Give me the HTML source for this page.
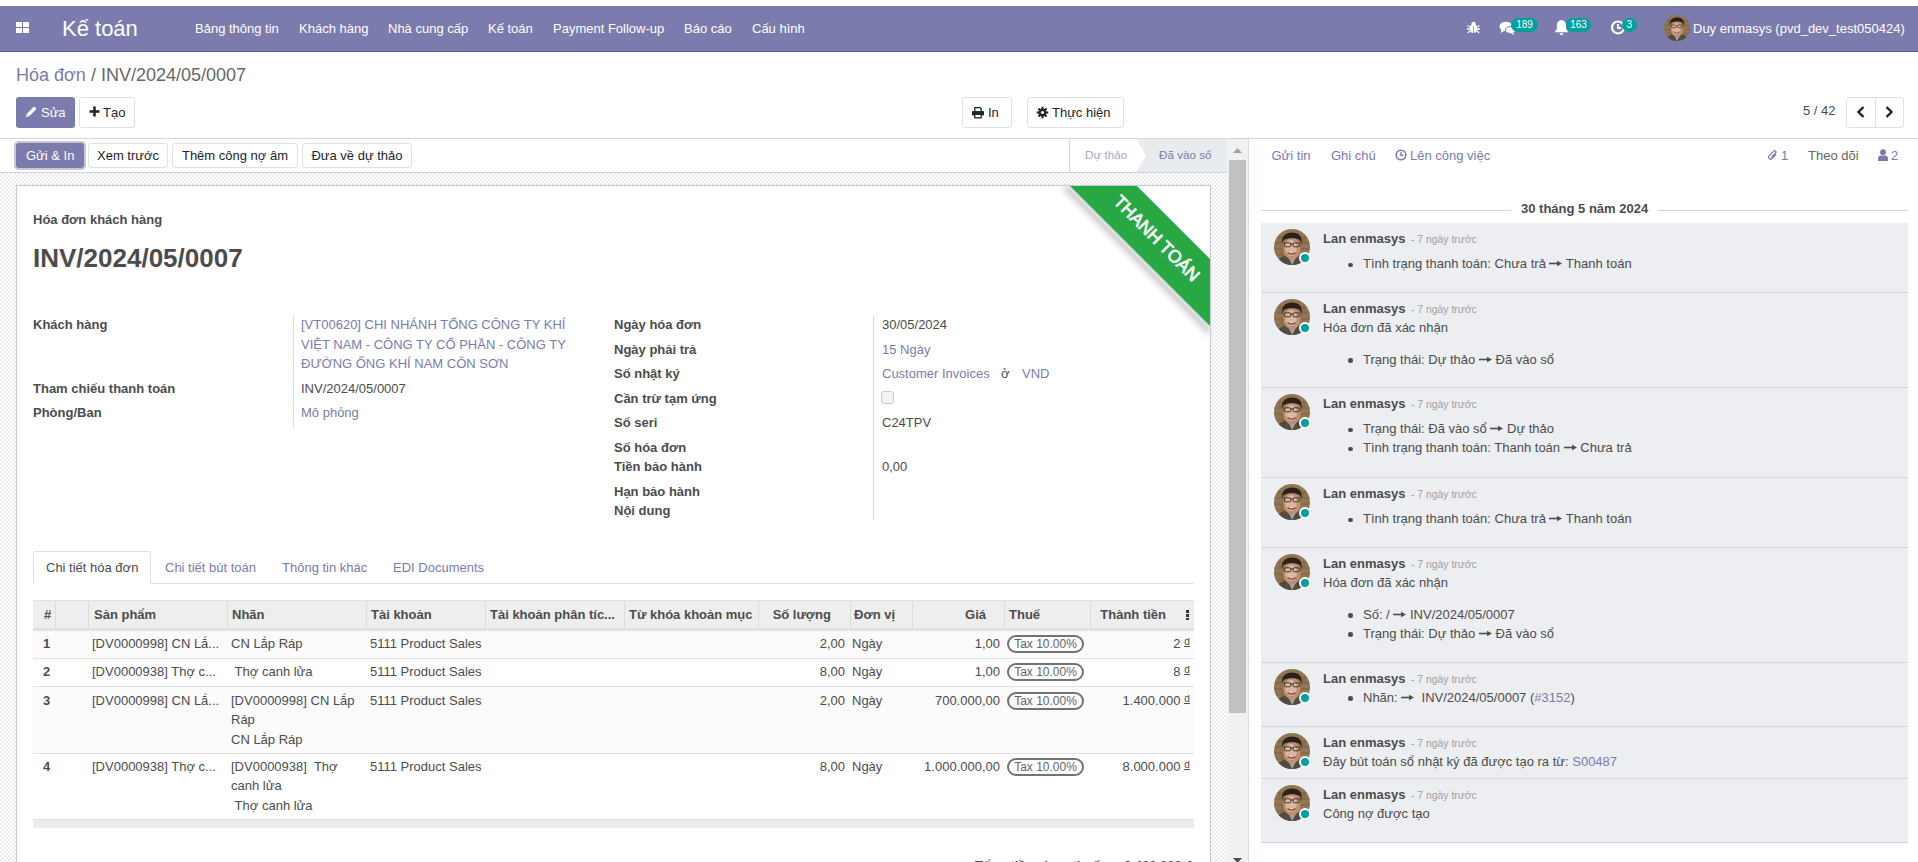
<!DOCTYPE html><html><head><meta charset="utf-8"><style>
*{box-sizing:border-box;margin:0;padding:0}
html,body{width:1918px;height:862px;overflow:hidden;background:#fff;font-family:"Liberation Sans",sans-serif;font-size:13px;color:#4c4c4c}
.a{position:absolute;white-space:nowrap}
.r{position:absolute}
.badge{position:absolute;background:#00a09d;color:#fff;border-radius:7px;font-size:10px;line-height:14px;height:14px;text-align:center}
.btn{position:absolute;border:1px solid #dee2e6;border-radius:3px;background:#fff}
.chk{background-image:conic-gradient(#ebebeb 25%,#fff 0 50%,#ebebeb 0 75%,#fff 0);background-size:4px 4px}
.tax{position:absolute;border:2px solid #737373;border-radius:9px;height:18px;width:77px;font-size:12px;line-height:15px;color:#666;text-align:center}
.av{position:absolute;width:36px;height:36px;border-radius:50%;overflow:hidden;background:#8b6a48}
.dot{position:absolute;width:12px;height:12px;border-radius:50%;background:#00a09d;border:2px solid #fff}
svg{position:absolute;overflow:visible}
</style></head><body>
<svg width="0" height="0" style="position:absolute"><defs><symbol id="face" viewBox="0 0 36 36"><clipPath id="cc"><circle cx="18" cy="18" r="18"/></clipPath><g clip-path="url(#cc)"><rect width="36" height="36" fill="#927653"/><path d="M0 8h36M0 14h36M0 20h36M0 26h36M6 8v6M26 14v6M8 20v6M30 8v6" stroke="#6a5538" stroke-width="1.1" opacity=".55"/><path d="M2 36C3 30 7 27.5 12 26.5L18 29L24 26.5C29 27.5 33 30 34 36z" fill="#544b40"/><path d="M14 27L18 36L23 27z" fill="#9fa39e"/><ellipse cx="18" cy="19.5" rx="8.6" ry="11" fill="#c08f73"/><ellipse cx="17" cy="19" rx="5.8" ry="8" fill="#dcb69f"/><path d="M8 15C7 7 12 3.5 18 3.5C24.5 3.5 29 7 27.5 15L26 11C22 8.5 14 8.5 9.5 11z" fill="#2b201a"/><rect x="10.5" y="13.8" width="6.2" height="4" rx="1.2" fill="none" stroke="#33261f" stroke-width="0.9"/><rect x="19" y="13.8" width="6.2" height="4" rx="1.2" fill="none" stroke="#33261f" stroke-width="0.9"/><path d="M16.7 15h2.3" stroke="#33261f" stroke-width="0.9"/><path d="M13.5 23.5Q17.5 26.8 21.5 23.5" stroke="#6e4034" stroke-width="1.3" fill="#efe2d8"/></g></symbol></defs></svg>
<div class="r" style="left:0px;top:6px;width:1918px;height:46px;background:#7c7bad;border-bottom:1px solid #5f5e97"></div>
<div class="r" style="left:16px;top:22px;width:6px;height:5px;background:#fff"></div>
<div class="r" style="left:23px;top:22px;width:6px;height:5px;background:#fff"></div>
<div class="r" style="left:16px;top:28px;width:6px;height:5px;background:#fff"></div>
<div class="r" style="left:23px;top:28px;width:6px;height:5px;background:#fff"></div>
<div class="a" style="left:62px;top:11.88px;font-size:22px;line-height:33px;color:#fff;">Kế toán</div>
<div class="a" style="left:195px;top:18.50px;font-size:13px;line-height:20px;color:#fff;">Bảng thông tin</div>
<div class="a" style="left:299px;top:18.50px;font-size:13px;line-height:20px;color:#fff;">Khách hàng</div>
<div class="a" style="left:388px;top:18.50px;font-size:13px;line-height:20px;color:#fff;">Nhà cung cấp</div>
<div class="a" style="left:488px;top:18.50px;font-size:13px;line-height:20px;color:#fff;">Kế toán</div>
<div class="a" style="left:553px;top:18.50px;font-size:13px;line-height:20px;color:#fff;">Payment Follow-up</div>
<div class="a" style="left:684px;top:18.50px;font-size:13px;line-height:20px;color:#fff;">Báo cáo</div>
<div class="a" style="left:752px;top:18.50px;font-size:13px;line-height:20px;color:#fff;">Cấu hình</div>
<svg style="left:1467px;top:21px" width="13" height="13" viewBox="0 0 13 13"><ellipse cx="6.5" cy="7.5" rx="3.6" ry="4.5" fill="#fff"/><circle cx="6.5" cy="3" r="2.2" fill="#fff"/><path d="M0.5 4.5L3 6M12.5 4.5L10 6M0 8h3M13 8h-3M0.8 12L3 10M12.2 12L10 10" stroke="#fff" stroke-width="1.3"/><path d="M6.5 5.5v6.5" stroke="#7c7bad" stroke-width="0.8"/></svg>
<svg style="left:1499px;top:21px" width="17" height="14" viewBox="0 0 17 14"><ellipse cx="7" cy="5.5" rx="6.5" ry="4.8" fill="#fff"/><path d="M2.5 8.5L1.5 12L6 9.5z" fill="#fff"/><ellipse cx="11.5" cy="9" rx="5" ry="3.6" fill="#fff" stroke="#7c7bad" stroke-width="1"/><path d="M14 11.5L15.5 14L11.5 12z" fill="#fff"/></svg>
<div class="badge" style="left:1511px;top:18px;width:27px">189</div>
<svg style="left:1552.5px;top:19px" width="17" height="17" viewBox="0 0 16 16"><path d="M8 1.2C5 1.2 3.6 3.6 3.6 6.5v3.2L1.5 12.5h13L12.4 9.7V6.5C12.4 3.6 11 1.2 8 1.2z" fill="#fff"/><path d="M6.2 13.5a1.8 1.8 0 0 0 3.6 0z" fill="#fff"/></svg>
<div class="badge" style="left:1566px;top:18px;width:25px">163</div>
<svg style="left:1609.5px;top:19px" width="16" height="16" viewBox="0 0 16 16"><circle cx="8" cy="8.5" r="6" fill="none" stroke="#fff" stroke-width="2.2"/><path d="M8 5v4h3" stroke="#fff" stroke-width="1.8" fill="none"/></svg>
<div class="badge" style="left:1621.5px;top:18px;width:15.5px">3</div>
<svg style="left:1664px;top:15px" width="26" height="26" viewBox="0 0 36 36"><use href="#face"/></svg>
<div class="a" style="left:1693px;top:18.50px;font-size:13px;line-height:20px;color:#fff;">Duy enmasys (pvd_dev_test050424)</div>
<div class="a" style="left:16px;top:62.26px;font-size:18px;line-height:27px;"><span style="color:#7c7bad">Hóa đơn</span> <span style="color:#666">/ INV/2024/05/0007</span></div>
<div class="r" style="left:16px;top:97px;width:59px;height:31px;background:#7c7bad;border-radius:3px"></div>
<svg style="left:25px;top:106px" width="12" height="12" viewBox="0 0 12 12"><path d="M1 11l0.6-3L8.5 1.1a1 1 0 0 1 1.4 0l1 1a1 1 0 0 1 0 1.4L4 10.4z" fill="#fff"/><path d="M1.8 8.2l2 2" stroke="#7c7bad" stroke-width="0.8"/></svg>
<div class="a" style="left:41px;top:102.50px;font-size:13px;line-height:20px;color:#fff;">Sửa</div>
<div class="btn" style="left:79px;top:97px;width:56px;height:31px"></div>
<svg style="left:89px;top:106px" width="11" height="11" viewBox="0 0 11 11"><path d="M5.5 0.5v10M0.5 5.5h10" stroke="#212529" stroke-width="2.6"/></svg>
<div class="a" style="left:103px;top:102.50px;font-size:13px;line-height:20px;color:#212529;">Tạo</div>
<div class="btn" style="left:962px;top:97px;width:50px;height:31px"></div>
<svg style="left:972px;top:107px" width="12" height="12" viewBox="0 0 12 12"><path d="M2.8 4.2V0.7H8.2L9.2 1.7V4.2" fill="none" stroke="#212529" stroke-width="1.3"/><rect x="0" y="4" width="12" height="4.6" rx="0.8" fill="#212529"/><rect x="2.8" y="7.3" width="6.4" height="3.5" fill="#fff" stroke="#212529" stroke-width="1.3"/></svg>
<div class="a" style="left:988px;top:102.50px;font-size:13px;line-height:20px;color:#212529;">In</div>
<div class="btn" style="left:1027px;top:97px;width:97px;height:31px"></div>
<svg style="left:1037px;top:107px" width="11" height="11" viewBox="0 0 12 12"><g fill="#212529"><rect x="4.9" y="-0.3" width="2.2" height="3" transform="rotate(0 6 6)"/><rect x="4.9" y="-0.3" width="2.2" height="3" transform="rotate(45 6 6)"/><rect x="4.9" y="-0.3" width="2.2" height="3" transform="rotate(90 6 6)"/><rect x="4.9" y="-0.3" width="2.2" height="3" transform="rotate(135 6 6)"/><rect x="4.9" y="-0.3" width="2.2" height="3" transform="rotate(180 6 6)"/><rect x="4.9" y="-0.3" width="2.2" height="3" transform="rotate(225 6 6)"/><rect x="4.9" y="-0.3" width="2.2" height="3" transform="rotate(270 6 6)"/><rect x="4.9" y="-0.3" width="2.2" height="3" transform="rotate(315 6 6)"/><circle cx="6" cy="6" r="4.3"/></g><circle cx="6" cy="6" r="1.7" fill="#fff"/></svg>
<div class="a" style="left:1052px;top:102.50px;font-size:13px;line-height:20px;color:#212529;">Thực hiện</div>
<div class="a" style="left:1803px;top:101.00px;font-size:13px;line-height:20px;color:#4c4c4c;">5 / 42</div>
<div class="btn" style="left:1846px;top:97px;width:58px;height:31px"></div>
<div class="r" style="left:1875px;top:98px;width:1px;height:29px;background:#dee2e6"></div>
<svg style="left:1856px;top:106px" width="10" height="12" viewBox="0 0 10 12"><path d="M7.5 1L2.5 6l5 5" stroke="#212529" stroke-width="2.4" fill="none"/></svg>
<svg style="left:1884px;top:106px" width="10" height="12" viewBox="0 0 10 12"><path d="M2.5 1l5 5-5 5" stroke="#212529" stroke-width="2.4" fill="none"/></svg>
<div class="r" style="left:0px;top:138px;width:1918px;height:1px;background:#d5d5d5"></div>
<div class="r" style="left:0px;top:139px;width:1227px;height:33px;background:#fff"></div>
<div class="r" style="left:0px;top:172px;width:1227px;height:1px;background:#cfd3dc"></div>
<div class="r" style="left:0px;top:173px;width:1227px;height:700px;"></div>
<div class="r chk" style="left:0;top:173px;width:1227px;height:700px"></div>
<div class="r" style="left:14px;top:141px;width:72px;height:29px;border-radius:4.5px;background:rgba(124,123,173,.42)"></div>
<div class="r" style="left:16px;top:143px;width:68px;height:25px;background:#7c7bad;border-radius:3px"></div>
<div class="a" style="left:26px;top:145.50px;font-size:13px;line-height:20px;color:#fff;">Gửi &amp; In</div>
<div class="btn" style="left:88px;top:143px;width:80px;height:25px"></div>
<div class="a" style="left:-172.0px;width:600px;text-align:center;top:145.50px;font-size:13px;line-height:20px;color:#212529;">Xem trước</div>
<div class="btn" style="left:172px;top:143px;width:126px;height:25px"></div>
<div class="a" style="left:-65.0px;width:600px;text-align:center;top:145.50px;font-size:13px;line-height:20px;color:#212529;">Thêm công nợ âm</div>
<div class="btn" style="left:302px;top:143px;width:110px;height:25px"></div>
<div class="a" style="left:57.0px;width:600px;text-align:center;top:145.50px;font-size:13px;line-height:20px;color:#212529;">Đưa về dự thảo</div>
<div class="r" style="left:1069px;top:139px;width:1px;height:33px;background:#d5d9e0"></div>
<svg style="left:1136px;top:139px" width="91" height="33" viewBox="0 0 91 33"><path d="M0 0H91V33H0L10 16.5z" fill="#e9ecef"/></svg>
<div class="a" style="left:1085px;top:145.95px;font-size:11.7px;line-height:18px;color:#a8a7c9;">Dự thảo</div>
<div class="a" style="left:1159px;top:145.95px;font-size:11.7px;line-height:18px;color:#7c7bad;">Đã vào sổ</div>
<div class="r" style="left:16px;top:185px;width:1195px;height:700px;background:#fff;border:1px solid #c9cad4;box-shadow:0 0 2px rgba(0,0,0,.08)"></div>
<svg style="left:1040px;top:186px" width="170" height="170" viewBox="0 0 170 170"><defs><filter id="bl" x="-50%" y="-50%" width="200%" height="200%"><feGaussianBlur stdDeviation="3"/></filter><clipPath id="cp"><rect x="0" y="0" width="170" height="170"/></clipPath></defs><g clip-path="url(#cp)"><path d="M30 0L170 140L170 150L22 2z" fill="rgba(0,0,0,.22)" filter="url(#bl)"/><path d="M30 0H97L170 73V140z" fill="#28a745"/><text x="0" y="0" transform="translate(112.5 56.5) rotate(45)" text-anchor="middle" font-family="Liberation Sans" font-size="17.5" fill="#fff" stroke="#fff" stroke-width="0.7">THANH TOÁN</text></g></svg>
<div class="a" style="left:33px;top:209.50px;font-size:13px;line-height:20px;font-weight:bold;">Hóa đơn khách hàng</div>
<div class="a" style="left:33px;top:239.49px;font-size:26px;line-height:39px;font-weight:bold;color:#4c4c4c;">INV/2024/05/0007</div>
<div class="a" style="left:33px;top:314.50px;font-size:13px;line-height:20px;font-weight:bold;">Khách hàng</div>
<div class="a" style="left:33px;top:378.50px;font-size:13px;line-height:20px;font-weight:bold;">Tham chiếu thanh toán</div>
<div class="a" style="left:33px;top:402.50px;font-size:13px;line-height:20px;font-weight:bold;">Phòng/Ban</div>
<div class="r" style="left:293px;top:315px;width:1px;height:113px;background:#dcdde2"></div>
<div class="a" style="left:301px;top:314.50px;font-size:13px;line-height:20px;color:#7c7bad;">[VT00620] CHI NHÁNH TỔNG CÔNG TY KHÍ</div>
<div class="a" style="left:301px;top:334.50px;font-size:13px;line-height:20px;color:#7c7bad;">VIỆT NAM - CÔNG TY CỔ PHẦN - CÔNG TY</div>
<div class="a" style="left:301px;top:353.50px;font-size:13px;line-height:20px;color:#7c7bad;">ĐƯỜNG ỐNG KHÍ NAM CÔN SƠN</div>
<div class="a" style="left:301px;top:378.50px;font-size:13px;line-height:20px;">INV/2024/05/0007</div>
<div class="a" style="left:301px;top:402.50px;font-size:13px;line-height:20px;color:#7c7bad;">Mô phỏng</div>
<div class="a" style="left:614px;top:314.50px;font-size:13px;line-height:20px;font-weight:bold;">Ngày hóa đơn</div>
<div class="a" style="left:614px;top:339.50px;font-size:13px;line-height:20px;font-weight:bold;">Ngày phải trả</div>
<div class="a" style="left:614px;top:363.50px;font-size:13px;line-height:20px;font-weight:bold;">Số nhật ký</div>
<div class="a" style="left:614px;top:388.50px;font-size:13px;line-height:20px;font-weight:bold;">Cần trừ tạm ứng</div>
<div class="a" style="left:614px;top:412.50px;font-size:13px;line-height:20px;font-weight:bold;">Số seri</div>
<div class="a" style="left:614px;top:437.50px;font-size:13px;line-height:20px;font-weight:bold;">Số hóa đơn</div>
<div class="a" style="left:614px;top:456.50px;font-size:13px;line-height:20px;font-weight:bold;">Tiền bảo hành</div>
<div class="a" style="left:614px;top:481.50px;font-size:13px;line-height:20px;font-weight:bold;">Hạn bảo hành</div>
<div class="a" style="left:614px;top:500.50px;font-size:13px;line-height:20px;font-weight:bold;">Nội dung</div>
<div class="r" style="left:873px;top:315px;width:1px;height:205px;background:#dcdde2"></div>
<div class="a" style="left:882px;top:314.50px;font-size:13px;line-height:20px;">30/05/2024</div>
<div class="a" style="left:882px;top:339.50px;font-size:13px;line-height:20px;color:#7c7bad;">15 Ngày</div>
<div class="a" style="left:882px;top:363.50px;font-size:13px;line-height:20px;color:#7c7bad;">Customer Invoices</div>
<div class="a" style="left:1001px;top:363.50px;font-size:13px;line-height:20px;">ở</div>
<div class="a" style="left:1022px;top:363.50px;font-size:13px;line-height:20px;color:#7c7bad;">VND</div>
<div class="r" style="left:881px;top:391px;width:13px;height:13px;border:1px solid #c9c9c9;border-radius:3px;background:#f3f3f3"></div>
<div class="a" style="left:882px;top:412.50px;font-size:13px;line-height:20px;">C24TPV</div>
<div class="a" style="left:882px;top:456.50px;font-size:13px;line-height:20px;">0,00</div>
<div class="r" style="left:33px;top:583px;width:1161px;height:1px;background:#dee2e6"></div>
<div class="r" style="left:33px;top:551px;width:118px;height:33px;background:#fff;border:1px solid #dee2e6;border-bottom-color:#fff;border-radius:3px 3px 0 0"></div>
<div class="a" style="left:46px;top:557.50px;font-size:13px;line-height:20px;color:#4c4c4c;">Chi tiết hóa đơn</div>
<div class="a" style="left:165px;top:557.50px;font-size:13px;line-height:20px;color:#7c7bad;">Chi tiết bút toán</div>
<div class="a" style="left:282px;top:557.50px;font-size:13px;line-height:20px;color:#7c7bad;">Thông tin khác</div>
<div class="a" style="left:393px;top:557.50px;font-size:13px;line-height:20px;color:#7c7bad;">EDI Documents</div>
<div class="r" style="left:33px;top:600px;width:1161px;height:30px;background:#eeeeee;border-bottom:2px solid #dee2e6;border-top:1px solid #e2e2e2"></div>
<div class="r" style="left:55px;top:601px;width:1px;height:27px;background:#dcdcdc"></div>
<div class="r" style="left:88px;top:601px;width:1px;height:27px;background:#dcdcdc"></div>
<div class="r" style="left:227px;top:601px;width:1px;height:27px;background:#dcdcdc"></div>
<div class="r" style="left:366px;top:601px;width:1px;height:27px;background:#dcdcdc"></div>
<div class="r" style="left:485px;top:601px;width:1px;height:27px;background:#dcdcdc"></div>
<div class="r" style="left:624px;top:601px;width:1px;height:27px;background:#dcdcdc"></div>
<div class="r" style="left:758px;top:601px;width:1px;height:27px;background:#dcdcdc"></div>
<div class="r" style="left:850px;top:601px;width:1px;height:27px;background:#dcdcdc"></div>
<div class="r" style="left:912px;top:601px;width:1px;height:27px;background:#dcdcdc"></div>
<div class="r" style="left:1004px;top:601px;width:1px;height:27px;background:#dcdcdc"></div>
<div class="r" style="left:1090px;top:601px;width:1px;height:27px;background:#dcdcdc"></div>
<div class="a" style="left:44px;top:604.50px;font-size:13px;line-height:20px;font-weight:bold;">#</div>
<div class="a" style="left:94px;top:604.50px;font-size:13px;line-height:20px;font-weight:bold;">Sản phẩm</div>
<div class="a" style="left:232px;top:604.50px;font-size:13px;line-height:20px;font-weight:bold;">Nhãn</div>
<div class="a" style="left:371px;top:604.50px;font-size:13px;line-height:20px;font-weight:bold;">Tài khoản</div>
<div class="a" style="left:490px;top:604.50px;font-size:13px;line-height:20px;font-weight:bold;">Tài khoản phân tíc...</div>
<div class="a" style="left:629px;top:604.50px;font-size:13px;line-height:20px;font-weight:bold;">Từ khóa khoản mục</div>
<div class="a" style="right:1087px;text-align:right;top:604.50px;font-size:13px;line-height:20px;font-weight:bold;">Số lượng</div>
<div class="a" style="left:854px;top:604.50px;font-size:13px;line-height:20px;font-weight:bold;">Đơn vị</div>
<div class="a" style="right:932px;text-align:right;top:604.50px;font-size:13px;line-height:20px;font-weight:bold;">Giá</div>
<div class="a" style="left:1009px;top:604.50px;font-size:13px;line-height:20px;font-weight:bold;">Thuế</div>
<div class="a" style="right:752px;text-align:right;top:604.50px;font-size:13px;line-height:20px;font-weight:bold;">Thành tiền</div>
<div class="r" style="left:1186px;top:610.3px;width:3px;height:2.5px;background:#333"></div>
<div class="r" style="left:1186px;top:614px;width:3px;height:2.5px;background:#333"></div>
<div class="r" style="left:1186px;top:617.5px;width:3px;height:2.5px;background:#333"></div>
<div class="r" style="left:33px;top:630px;width:1161px;height:28px;background:#fbfbfb;border-top:1px solid #dee2e6"></div>
<div class="a" style="left:43px;top:633.50px;font-size:13px;line-height:20px;font-weight:bold;">1</div>
<div class="a" style="left:92px;top:633.50px;font-size:13px;line-height:20px;">[DV0000998] CN Lắ...</div>
<div class="a" style="left:231px;top:633.50px;font-size:13px;line-height:20px;">CN Lắp Ráp</div>
<div class="a" style="left:370px;top:633.50px;font-size:13px;line-height:20px;">5111 Product Sales</div>
<div class="a" style="right:1073px;text-align:right;top:633.50px;font-size:13px;line-height:20px;">2,00</div>
<div class="a" style="left:852px;top:633.50px;font-size:13px;line-height:20px;">Ngày</div>
<div class="a" style="right:918px;text-align:right;top:633.50px;font-size:13px;line-height:20px;">1,00</div>
<div class="tax" style="left:1007px;top:635px">Tax 10.00%</div>
<div class="a" style="right:728px;text-align:right;top:633.50px;font-size:13px;line-height:20px;">2 <span style="display:inline-block;width:6px;font-size:10px;line-height:8px;height:9px;border-bottom:1px solid #4c4c4c;vertical-align:1px;text-align:center;overflow:hidden">đ</span></div>
<div class="r" style="left:33px;top:658px;width:1161px;height:28px;background:#fff;border-top:1px solid #dee2e6"></div>
<div class="a" style="left:43px;top:661.50px;font-size:13px;line-height:20px;font-weight:bold;">2</div>
<div class="a" style="left:92px;top:661.50px;font-size:13px;line-height:20px;">[DV0000938] Thợ c...</div>
<div class="a" style="left:231px;top:661.50px;font-size:13px;line-height:20px;">&nbsp;Thợ canh lửa</div>
<div class="a" style="left:370px;top:661.50px;font-size:13px;line-height:20px;">5111 Product Sales</div>
<div class="a" style="right:1073px;text-align:right;top:661.50px;font-size:13px;line-height:20px;">8,00</div>
<div class="a" style="left:852px;top:661.50px;font-size:13px;line-height:20px;">Ngày</div>
<div class="a" style="right:918px;text-align:right;top:661.50px;font-size:13px;line-height:20px;">1,00</div>
<div class="tax" style="left:1007px;top:663px">Tax 10.00%</div>
<div class="a" style="right:728px;text-align:right;top:661.50px;font-size:13px;line-height:20px;">8 <span style="display:inline-block;width:6px;font-size:10px;line-height:8px;height:9px;border-bottom:1px solid #4c4c4c;vertical-align:1px;text-align:center;overflow:hidden">đ</span></div>
<div class="r" style="left:33px;top:686px;width:1161px;height:67px;background:#fbfbfb;border-top:1px solid #dee2e6"></div>
<div class="a" style="left:43px;top:690.50px;font-size:13px;line-height:20px;font-weight:bold;">3</div>
<div class="a" style="left:92px;top:690.50px;font-size:13px;line-height:20px;">[DV0000998] CN Lắ...</div>
<div class="a" style="left:231px;top:690.50px;font-size:13px;line-height:20px;">[DV0000998] CN Lắp</div>
<div class="a" style="left:231px;top:710.00px;font-size:13px;line-height:20px;">Ráp</div>
<div class="a" style="left:231px;top:729.50px;font-size:13px;line-height:20px;">CN Lắp Ráp</div>
<div class="a" style="left:370px;top:690.50px;font-size:13px;line-height:20px;">5111 Product Sales</div>
<div class="a" style="right:1073px;text-align:right;top:690.50px;font-size:13px;line-height:20px;">2,00</div>
<div class="a" style="left:852px;top:690.50px;font-size:13px;line-height:20px;">Ngày</div>
<div class="a" style="right:918px;text-align:right;top:690.50px;font-size:13px;line-height:20px;">700.000,00</div>
<div class="tax" style="left:1007px;top:692px">Tax 10.00%</div>
<div class="a" style="right:728px;text-align:right;top:690.50px;font-size:13px;line-height:20px;">1.400.000 <span style="display:inline-block;width:6px;font-size:10px;line-height:8px;height:9px;border-bottom:1px solid #4c4c4c;vertical-align:1px;text-align:center;overflow:hidden">đ</span></div>
<div class="r" style="left:33px;top:753px;width:1161px;height:66px;background:#fff;border-top:1px solid #dee2e6"></div>
<div class="a" style="left:43px;top:756.50px;font-size:13px;line-height:20px;font-weight:bold;">4</div>
<div class="a" style="left:92px;top:756.50px;font-size:13px;line-height:20px;">[DV0000938] Thợ c...</div>
<div class="a" style="left:231px;top:756.50px;font-size:13px;line-height:20px;">[DV0000938]&nbsp; Thợ</div>
<div class="a" style="left:231px;top:776.00px;font-size:13px;line-height:20px;">canh lửa</div>
<div class="a" style="left:231px;top:795.50px;font-size:13px;line-height:20px;">&nbsp;Thợ canh lửa</div>
<div class="a" style="left:370px;top:756.50px;font-size:13px;line-height:20px;">5111 Product Sales</div>
<div class="a" style="right:1073px;text-align:right;top:756.50px;font-size:13px;line-height:20px;">8,00</div>
<div class="a" style="left:852px;top:756.50px;font-size:13px;line-height:20px;">Ngày</div>
<div class="a" style="right:918px;text-align:right;top:756.50px;font-size:13px;line-height:20px;">1.000.000,00</div>
<div class="tax" style="left:1007px;top:758px">Tax 10.00%</div>
<div class="a" style="right:728px;text-align:right;top:756.50px;font-size:13px;line-height:20px;">8.000.000 <span style="display:inline-block;width:6px;font-size:10px;line-height:8px;height:9px;border-bottom:1px solid #4c4c4c;vertical-align:1px;text-align:center;overflow:hidden">đ</span></div>
<div class="r" style="left:33px;top:819px;width:1161px;height:9px;background:#ececec;border-top:1px solid #dee2e6"></div>
<div class="a" style="left:975px;top:856.00px;font-size:13px;line-height:20px;font-weight:bold;">Tổng tiền chưa thuế:</div>
<div class="a" style="right:726px;text-align:right;top:856.00px;font-size:13px;line-height:20px;font-weight:bold;">9.400.000 ₫</div>
<div class="r" style="left:1227px;top:139px;width:21px;height:723px;background:#f1f1f1"></div>
<div class="r" style="left:1229px;top:160px;width:17px;height:553px;background:#c1c1c1"></div>
<svg style="left:1233px;top:148px" width="9" height="5" viewBox="0 0 9 5"><path d="M4.5 0L9 5H0z" fill="#a3a3a3"/></svg>
<svg style="left:1233px;top:858px" width="9" height="5" viewBox="0 0 9 5"><path d="M4.5 5L9 0H0z" fill="#505050"/></svg>
<div class="r" style="left:1248px;top:139px;width:1px;height:723px;background:#d8dce3"></div>
<div class="a" style="left:1271.5px;top:145.50px;font-size:13px;line-height:20px;color:#7c7bad;">Gửi tin</div>
<div class="a" style="left:1331px;top:145.50px;font-size:13px;line-height:20px;color:#7c7bad;">Ghi chú</div>
<svg style="left:1395px;top:149px" width="12" height="12" viewBox="0 0 12 12"><circle cx="6" cy="6" r="4.8" fill="none" stroke="#7c7bad" stroke-width="1.6"/><path d="M6 3v3.3h2.3" stroke="#7c7bad" stroke-width="1.4" fill="none"/></svg>
<div class="a" style="left:1410px;top:145.50px;font-size:13px;line-height:20px;color:#7c7bad;">Lên công việc</div>
<svg style="left:1767px;top:149px" width="11" height="12" viewBox="0 0 11 12"><path d="M9 5.5L4.8 9.7a2 2 0 0 1-2.8-2.8L6.8 2.1a1.3 1.3 0 0 1 1.9 1.9L4.3 8.4" fill="none" stroke="#7c7bad" stroke-width="1.2"/></svg>
<div class="a" style="left:1781px;top:145.50px;font-size:13px;line-height:20px;color:#7c7bad;">1</div>
<div class="a" style="left:1808px;top:145.50px;font-size:13px;line-height:20px;color:#666;">Theo dõi</div>
<svg style="left:1878px;top:149px" width="10" height="12" viewBox="0 0 10 12"><circle cx="5" cy="3.2" r="2.9" fill="#7c7bad"/><path d="M0 12V9.5C0 7.5 1.5 6.5 3 6.5h4c1.5 0 3 1 3 3V12z" fill="#7c7bad"/></svg>
<div class="a" style="left:1891px;top:145.50px;font-size:13px;line-height:20px;color:#7c7bad;">2</div>
<div class="r" style="left:1261px;top:210px;width:250px;height:1px;background:#d2d4e2"></div>
<div class="r" style="left:1658px;top:210px;width:250px;height:1px;background:#d2d4e2"></div>
<div class="a" style="left:1521px;top:198.80px;font-size:13px;line-height:20px;font-weight:bold;">30 tháng 5 năm 2024</div>
<div class="r" style="left:1261px;top:223px;width:647px;height:69px;background:#eceef1"></div>
<svg style="left:1274px;top:229px" width="36" height="36"><use href="#face"/></svg>
<div class="dot" style="left:1298.5px;top:252.3px"></div>
<div class="a" style="left:1323px;top:228.50px;font-size:13px;line-height:20px;font-weight:bold;">Lan enmasys</div>
<div class="a" style="left:1411px;top:231.90px;font-size:10.4px;line-height:16px;color:#a0a0a0;">- 7 ngày trước</div>
<div class="r" style="left:1348px;top:262.7px;width:4.5px;height:4.5px;border-radius:50%;background:#4c4c4c"></div>
<div class="a" style="left:1363px;top:254.00px;font-size:13px;line-height:20px;">Tình trạng thanh toán: Chưa trả <svg width="13" height="7" viewBox="0 0 13 7" style="position:static;vertical-align:1px"><path d="M0 3.5h9" stroke="#4c4c4c" stroke-width="1.6"/><path d="M8 0.8L13 3.5L8 6.2z" fill="#4c4c4c"/></svg> Thanh toán</div>
<div class="r" style="left:1261px;top:292px;width:647px;height:95px;background:#eceef1;border-top:1px solid #d0d5dc"></div>
<svg style="left:1274px;top:299px" width="36" height="36"><use href="#face"/></svg>
<div class="dot" style="left:1298.5px;top:322.3px"></div>
<div class="a" style="left:1323px;top:298.50px;font-size:13px;line-height:20px;font-weight:bold;">Lan enmasys</div>
<div class="a" style="left:1411px;top:301.90px;font-size:10.4px;line-height:16px;color:#a0a0a0;">- 7 ngày trước</div>
<div class="a" style="left:1323px;top:317.50px;font-size:13px;line-height:20px;">Hóa đơn đã xác nhận</div>
<div class="r" style="left:1348px;top:358.2px;width:4.5px;height:4.5px;border-radius:50%;background:#4c4c4c"></div>
<div class="a" style="left:1363px;top:349.50px;font-size:13px;line-height:20px;">Trạng thái: Dự thảo <svg width="13" height="7" viewBox="0 0 13 7" style="position:static;vertical-align:1px"><path d="M0 3.5h9" stroke="#4c4c4c" stroke-width="1.6"/><path d="M8 0.8L13 3.5L8 6.2z" fill="#4c4c4c"/></svg> Đã vào sổ</div>
<div class="r" style="left:1261px;top:387px;width:647px;height:90px;background:#eceef1;border-top:1px solid #d0d5dc"></div>
<svg style="left:1274px;top:394px" width="36" height="36"><use href="#face"/></svg>
<div class="dot" style="left:1298.5px;top:417.3px"></div>
<div class="a" style="left:1323px;top:393.50px;font-size:13px;line-height:20px;font-weight:bold;">Lan enmasys</div>
<div class="a" style="left:1411px;top:396.90px;font-size:10.4px;line-height:16px;color:#a0a0a0;">- 7 ngày trước</div>
<div class="r" style="left:1348px;top:427.7px;width:4.5px;height:4.5px;border-radius:50%;background:#4c4c4c"></div>
<div class="a" style="left:1363px;top:419.00px;font-size:13px;line-height:20px;">Trạng thái: Đã vào sổ <svg width="13" height="7" viewBox="0 0 13 7" style="position:static;vertical-align:1px"><path d="M0 3.5h9" stroke="#4c4c4c" stroke-width="1.6"/><path d="M8 0.8L13 3.5L8 6.2z" fill="#4c4c4c"/></svg> Dự thảo</div>
<div class="r" style="left:1348px;top:446.7px;width:4.5px;height:4.5px;border-radius:50%;background:#4c4c4c"></div>
<div class="a" style="left:1363px;top:438.00px;font-size:13px;line-height:20px;">Tình trạng thanh toán: Thanh toán <svg width="13" height="7" viewBox="0 0 13 7" style="position:static;vertical-align:1px"><path d="M0 3.5h9" stroke="#4c4c4c" stroke-width="1.6"/><path d="M8 0.8L13 3.5L8 6.2z" fill="#4c4c4c"/></svg> Chưa trả</div>
<div class="r" style="left:1261px;top:477px;width:647px;height:70px;background:#eceef1;border-top:1px solid #d0d5dc"></div>
<svg style="left:1274px;top:484px" width="36" height="36"><use href="#face"/></svg>
<div class="dot" style="left:1298.5px;top:507.3px"></div>
<div class="a" style="left:1323px;top:483.50px;font-size:13px;line-height:20px;font-weight:bold;">Lan enmasys</div>
<div class="a" style="left:1411px;top:486.90px;font-size:10.4px;line-height:16px;color:#a0a0a0;">- 7 ngày trước</div>
<div class="r" style="left:1348px;top:517.7px;width:4.5px;height:4.5px;border-radius:50%;background:#4c4c4c"></div>
<div class="a" style="left:1363px;top:509.00px;font-size:13px;line-height:20px;">Tình trạng thanh toán: Chưa trả <svg width="13" height="7" viewBox="0 0 13 7" style="position:static;vertical-align:1px"><path d="M0 3.5h9" stroke="#4c4c4c" stroke-width="1.6"/><path d="M8 0.8L13 3.5L8 6.2z" fill="#4c4c4c"/></svg> Thanh toán</div>
<div class="r" style="left:1261px;top:547px;width:647px;height:115px;background:#eceef1;border-top:1px solid #d0d5dc"></div>
<svg style="left:1274px;top:554px" width="36" height="36"><use href="#face"/></svg>
<div class="dot" style="left:1298.5px;top:577.3px"></div>
<div class="a" style="left:1323px;top:553.50px;font-size:13px;line-height:20px;font-weight:bold;">Lan enmasys</div>
<div class="a" style="left:1411px;top:556.90px;font-size:10.4px;line-height:16px;color:#a0a0a0;">- 7 ngày trước</div>
<div class="a" style="left:1323px;top:572.50px;font-size:13px;line-height:20px;">Hóa đơn đã xác nhận</div>
<div class="r" style="left:1348px;top:613.2px;width:4.5px;height:4.5px;border-radius:50%;background:#4c4c4c"></div>
<div class="a" style="left:1363px;top:604.50px;font-size:13px;line-height:20px;">Số: / <svg width="13" height="7" viewBox="0 0 13 7" style="position:static;vertical-align:1px"><path d="M0 3.5h9" stroke="#4c4c4c" stroke-width="1.6"/><path d="M8 0.8L13 3.5L8 6.2z" fill="#4c4c4c"/></svg> INV/2024/05/0007</div>
<div class="r" style="left:1348px;top:632.2px;width:4.5px;height:4.5px;border-radius:50%;background:#4c4c4c"></div>
<div class="a" style="left:1363px;top:623.50px;font-size:13px;line-height:20px;">Trạng thái: Dự thảo <svg width="13" height="7" viewBox="0 0 13 7" style="position:static;vertical-align:1px"><path d="M0 3.5h9" stroke="#4c4c4c" stroke-width="1.6"/><path d="M8 0.8L13 3.5L8 6.2z" fill="#4c4c4c"/></svg> Đã vào sổ</div>
<div class="r" style="left:1261px;top:662px;width:647px;height:64px;background:#eceef1;border-top:1px solid #d0d5dc"></div>
<svg style="left:1274px;top:669px" width="36" height="36"><use href="#face"/></svg>
<div class="dot" style="left:1298.5px;top:692.3px"></div>
<div class="a" style="left:1323px;top:668.50px;font-size:13px;line-height:20px;font-weight:bold;">Lan enmasys</div>
<div class="a" style="left:1411px;top:671.90px;font-size:10.4px;line-height:16px;color:#a0a0a0;">- 7 ngày trước</div>
<div class="r" style="left:1348px;top:696.2px;width:4.5px;height:4.5px;border-radius:50%;background:#4c4c4c"></div>
<div class="a" style="left:1363px;top:687.50px;font-size:13px;line-height:20px;">Nhãn: <svg width="13" height="7" viewBox="0 0 13 7" style="position:static;vertical-align:1px"><path d="M0 3.5h9" stroke="#4c4c4c" stroke-width="1.6"/><path d="M8 0.8L13 3.5L8 6.2z" fill="#4c4c4c"/></svg> &nbsp;INV/2024/05/0007 (<span style="color:#7c7bad">#3152</span>)</div>
<div class="r" style="left:1261px;top:726px;width:647px;height:52px;background:#eceef1;border-top:1px solid #d0d5dc"></div>
<svg style="left:1274px;top:733px" width="36" height="36"><use href="#face"/></svg>
<div class="dot" style="left:1298.5px;top:756.3px"></div>
<div class="a" style="left:1323px;top:732.50px;font-size:13px;line-height:20px;font-weight:bold;">Lan enmasys</div>
<div class="a" style="left:1411px;top:735.90px;font-size:10.4px;line-height:16px;color:#a0a0a0;">- 7 ngày trước</div>
<div class="a" style="left:1323px;top:751.50px;font-size:13px;line-height:20px;">Đây bút toán sổ nhật ký đã được tạo ra từ: <span style="color:#7c7bad">S00487</span></div>
<div class="r" style="left:1261px;top:778px;width:647px;height:64px;background:#eceef1;border-top:1px solid #d0d5dc"></div>
<svg style="left:1274px;top:785px" width="36" height="36"><use href="#face"/></svg>
<div class="dot" style="left:1298.5px;top:808.3px"></div>
<div class="a" style="left:1323px;top:784.50px;font-size:13px;line-height:20px;font-weight:bold;">Lan enmasys</div>
<div class="a" style="left:1411px;top:787.90px;font-size:10.4px;line-height:16px;color:#a0a0a0;">- 7 ngày trước</div>
<div class="a" style="left:1323px;top:803.50px;font-size:13px;line-height:20px;">Công nợ được tạo</div>
<div class="r" style="left:1261px;top:842px;width:647px;height:1px;background:#d0d5dc"></div>
</body></html>
